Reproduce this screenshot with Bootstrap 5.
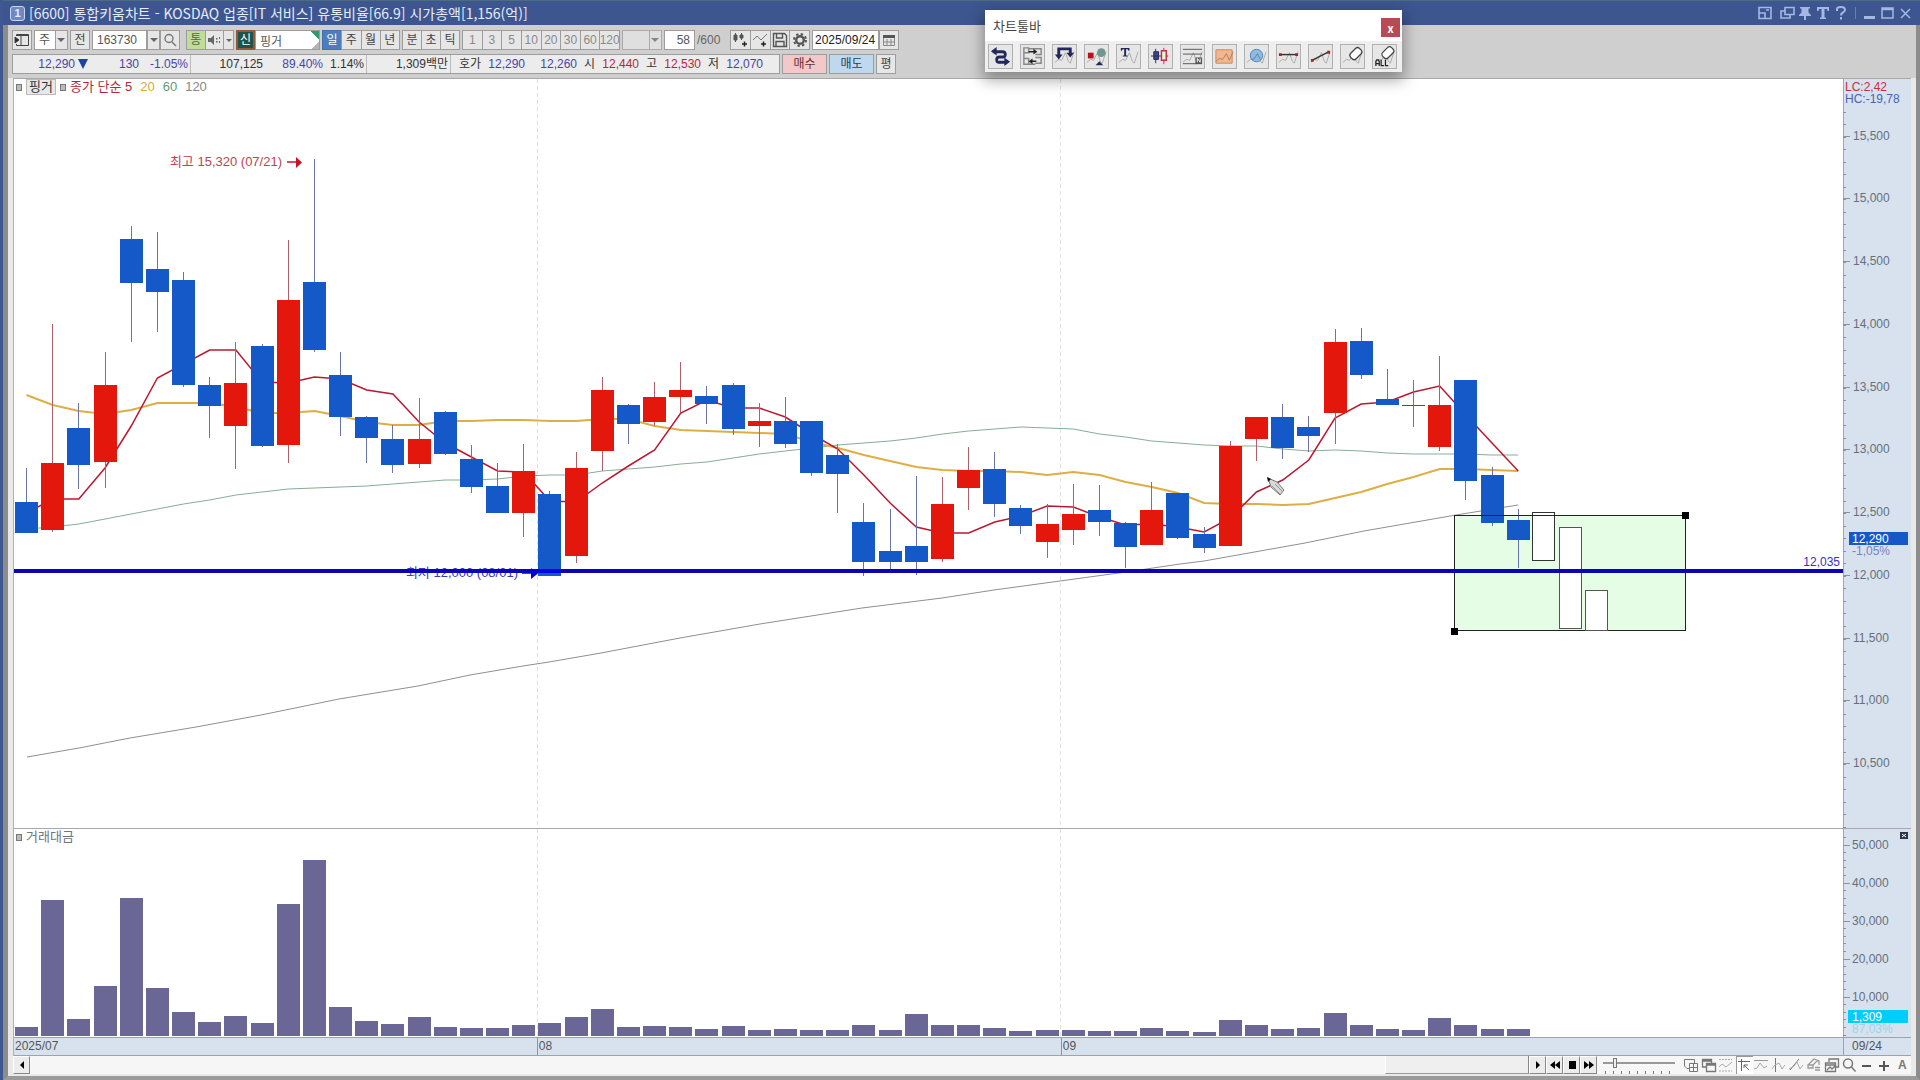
<!DOCTYPE html>
<html lang="ko">
<head>
<meta charset="utf-8">
<meta name="viewport" content="width=device-width, initial-scale=1">
<title>[6600] 통합키움차트</title>
<link href="https://cdn.jsdelivr.net/npm/bootstrap@5.3.0/dist/css/bootstrap.min.css" rel="stylesheet">
<style>
body{font-family:"Liberation Sans","Noto Sans CJK KR",sans-serif;font-size:12px;line-height:16px;color:#333;background:#9a9a9a;overflow:hidden}
.shell{border-left:3px solid #3f5891}
.titlebar{height:25px;background:#3d568f;border-top:1px solid #4c6c84;color:#e6ecfa;padding:0 6px 0 7px}
.titlebar h1{font-size:14px;line-height:20px;font-weight:400;font-family:"Noto Sans CJK KR",sans-serif}
.winno{width:15px;height:15px;border:1px solid #c7d4f2;border-radius:3px;background:#6f8ac2;font-size:11px;line-height:13px;font-weight:700;text-align:center}
.wbtns{gap:2px}
.wbtn{border:0;background:none;padding:0;width:16px;height:16px;color:#a5b8e4;display:flex}
.wbtn svg{width:16px;height:16px}
.work{border-left:5px solid #8c8c8c;border-right:4px solid #8c8c8c;border-bottom:4px solid #9a9a9a}
.tools{background:#cfcfcf;padding:5px 4px 4px;height:53px}
.trow{height:20px;gap:2px;margin-bottom:4px}
.tb{height:20px;width:20px;padding:0;border:1px solid #9d9d9d;background:#e6e6e6;color:#444;font-size:12px;line-height:18px;text-align:center;flex:none;border-radius:0;display:flex;align-items:center;justify-content:center}
.narrow{width:13px}
.tabs{flex:none}
.tabs .tb{margin-right:-1px;flex:1 1 0;min-width:0}
.tabs .tb:last-child{margin-right:0}
.tabs .tb.narrow{flex:0 0 11px}
.g3{width:58px}.g4{width:78px}.g8{width:158px}.gs{width:48px}.gi{width:80px}
.tb svg{width:16px;height:16px;flex:none}
.tb.narrow svg{width:8px}
.dim .tb{color:#8a8a8a}
.tb.day{background:#4f7dbb;color:#fff;border-color:#4470ad}
.tb.all{background:#bfdc98;color:#55683e}
.tb.sin{background:#1f5248;color:#fff;border:2px solid #93593c;line-height:16px;width:19px}
.fld{height:20px;border:1px solid #9d9d9d;border-radius:0;background:#fff;font-size:12px;line-height:18px;color:#555;padding:0 4px;flex:none;appearance:none}
.pick{background:#fff url("data:image/svg+xml,%3Csvg xmlns='http://www.w3.org/2000/svg' width='12' height='18'%3E%3Crect width='12' height='18' fill='%23e6e6e6'/%3E%3Cpath d='M.5 0v18' stroke='%239d9d9d'/%3E%3Cpath d='M2 7h8l-4 4z' fill='%23666'/%3E%3C/svg%3E") right center no-repeat}
.w34{width:34px}.w55{width:55px}.w40{width:40px}.w31{width:31px}.w65{width:65px}.w67{width:67px;padding:0 2px;color:#222}
.w40.pick{background-color:#e6e6e6;opacity:.7}
.ofmax{width:31px;line-height:20px;color:#666}
.corner{background:linear-gradient(225deg,#2f9a6c 6px,transparent 6px),linear-gradient(315deg,#b5b5b5 5px,#fff 5px)}
.quote{height:20px;width:768px;background:#ececec;border:1px solid #9d9d9d;line-height:18px;flex:none}
.quote span{text-align:right;flex:none;white-space:nowrap}
.dn{color:#4745a5}.up{color:#b5283c}
.cell{border-right:1px solid #bbb;padding-right:2px}
.q18{width:18px}.q30{width:30px}.q44{width:44px}.q48{width:48px}.q52{width:52px}.q60{width:60px}.q62{width:62px}.q72{width:72px}.q84{width:84px}
.buy{width:45px;background:#f3c8c8;color:#6b2e34}.sell{width:45px;background:#bfd8ee;color:#27405c}
.body2{background:#e9e9e9;padding:0 5px 2px 5px}
.chart{border-left:1px solid #a9b3bd;border-top:1px solid #a9a9a9}
.plot{background:#fff;min-width:0;flex:1 1 0;position:relative}
.scale{width:68px;background:#d7e2ee;flex:none;box-shadow:inset 1px 0 #9fa9b4;position:relative}
.plot svg,.scale svg{position:absolute;left:0;top:0;width:100%;height:100%;display:block}
.vol{height:209px;border-top:1px solid #a8a8ac}
.dates{height:19px;background:#d7e2ee;border-top:1px solid #9ba3ac;border-bottom:1px solid #9ba3ac;line-height:16px;color:#555}
.m1{flex:523 1 0;padding-left:1px}.m2{flex:523 1 0}.m3{flex:782 1 0}
.m2,.m3{border-left:1px solid #8c949c;padding-left:1px}
.mend{width:68px;flex:none;border-left:1px solid #9ba3ac;padding-left:8px}
.legend{position:absolute;left:2px;top:0;font-size:13px;line-height:16px;z-index:2;gap:4px}
.bx{width:6px;height:7px;border:1px solid #777;background:#bbb}
.nm{border:1px solid #bbb;background:#e8e8e8;font-size:13px;line-height:14px;padding:0 2px;color:#333}
.l5{color:#b5283c}.l20{color:#dba83a}.l60{color:#5f9a7c}.l120{color:#888}
.scroll{height:18px;background:#f6f6f6}
.sb{width:17px;height:18px;border:1px solid #fff;border-right-color:#888;border-bottom-color:#888;background:#ececec;padding:0;display:flex;align-items:center;justify-content:center;flex:none}
.sb svg{width:12px;height:12px}
.thumb{width:144px;background:#efefef;border-left:1px solid #fff;border-right:1px solid #888;border-bottom:1px solid #999}
.zoomr{width:72px;height:18px;margin:0 8px 0 6px;appearance:none;background:linear-gradient(#999,#999) 0 6px/100% 2px no-repeat,repeating-linear-gradient(90deg,#777 0 1px,transparent 1px 8px) 2px 15px/100% 3px no-repeat}
.zoomr::-webkit-slider-thumb{appearance:none;width:4px;height:10px;background:#eee;border:1px solid #777;margin-top:-4px}
.ibs{width:228px;flex:none}
.ib{border:0;background:none;padding:0;width:17px;height:18px;flex:none;color:#777}
.ib svg{width:16px;height:16px;display:block}
.ib.on{background:#fff;box-shadow:inset 1px 1px #999}
.float{position:absolute;left:985px;top:10px;width:417px;background:#efefef;box-shadow:0 6px 14px 2px rgba(0,0,0,.35);z-index:5}
.fhead{background:#fff;height:31px;padding:0 2px 0 8px;font-family:"Noto Sans CJK KR",sans-serif;font-size:13px;color:#444}
.fx{width:19px;height:19px;border:0;background:#b94a55;color:#fff;font-weight:700;font-size:11px;line-height:16px;padding:0;margin-top:8px}
.frow{gap:7px;padding:3px}
.fb{width:25px;height:25px;border:1px solid #b0b0b0;background:#e6e6e6;padding:0}
.fb svg{width:23px;height:23px;display:block}
.px{position:absolute;right:3px;top:3px;width:8px;height:7px;border:0;background:#2c3448;padding:0;z-index:3}
.scale .px svg{position:static;width:8px;height:7px}
svg text{font-size:12px}
svg text.ext{font-size:13px}
</style>
</head>
<body>
<div class="shell vh-100 d-flex flex-column">
<header class="titlebar d-flex align-items-center gap-1 flex-shrink-0">
 <span class="winno">1</span>
 <h1 class="m-0 me-auto">[6600] 통합키움차트 - KOSDAQ 업종[IT 서비스] 유통비율[66.9] 시가총액[1,156(억)]</h1>
 <div class="wbtns d-flex align-items-center">
 <button class="wbtn me-1" aria-label="축소"><svg viewBox="0 0 16 16" fill="none" stroke="currentColor" stroke-width="1.6"><path d="M2 2.500h12v11H2zM2 8h6v5M9 5h3"/></svg></button>
 <button class="wbtn" aria-label="복제"><svg viewBox="0 0 16 16" fill="none" stroke="currentColor" stroke-width="1.600"><path d="M6 2.500h9v7H6zM6 6H2v7h9v-3"/></svg></button>
 <button class="wbtn" aria-label="고정"><svg viewBox="0 0 16 16" fill="currentColor"><path d="M3 2h10v1.500h-1.500v4L14 10v1H9v4H7v-4H2v-1l2.500-2.500v-4H3z"/></svg></button>
 <button class="wbtn" aria-label="글꼴"><svg viewBox="0 0 16 16" fill="currentColor"><path d="M2 2h12v4h-1.500L12 4H9.500v8.500H11V14H5v-1.500h1.500V4H4l-.5 2H2z"/></svg></button>
 <button class="wbtn" aria-label="도움말"><svg viewBox="0 0 16 16" fill="none" stroke="currentColor" stroke-width="2"><path d="M4 6V4q0-2 4-2t4 3q0 1-2 2.500Q8 8.500 8 10.500M8 12v2.500"/></svg></button>
 <span class="vr text-white mx-1 my-1"></span>
 <button class="wbtn" aria-label="최소화"><svg viewBox="0 0 16 16" fill="currentColor"><path d="M2 11h11v3H2z"/></svg></button>
 <button class="wbtn" aria-label="최대화"><svg viewBox="0 0 16 16" fill="none" stroke="currentColor" stroke-width="1.500"><path d="M2 3h11v10H2zM2 4.500h11"/></svg></button>
 <button class="wbtn" aria-label="닫기"><svg viewBox="0 0 16 16" fill="none" stroke="currentColor" stroke-width="1.500"><path d="m3 4 9 9m0-9-9 9"/></svg></button>
 </div>
</header>
<main class="work flex-grow-1 d-flex flex-column">
<div class="tools flex-shrink-0">
 <div class="trow d-flex">
  <button class="tb" aria-label="패널"><svg viewBox="0 0 16 16" fill="none" stroke="#444"><path d="M2.500 4V2.500h12v11h-12V12M7 3v10M2 3.500h13"/><path d="M1 5l4 3-4 3z" fill="#222"/></svg></button>
  <select class="fld pick w34" aria-label="구분"><option>주</option></select>
  <button class="tb">전</button>
  <div class="d-flex pe-1">
  <input class="fld w55" aria-label="종목코드" value="163730">
  <button class="tb narrow" aria-label="종목 목록"><svg viewBox="0 0 8 16"><path d="M0 6h8l-4 4z" fill="#666"/></svg></button>
  <button class="tb" aria-label="검색"><svg viewBox="0 0 16 16" fill="none" stroke="#777" stroke-width="1.400"><circle cx="7" cy="6.500" r="4"/><path d="m10 10 4 4"/></svg></button>
  </div>
  <div class="d-flex tabs gs">
  <button class="tb all">통</button>
  <button class="tb" aria-label="소리"><svg viewBox="0 0 16 16" fill="#666"><path d="M2 6h3l3-3v10L5 10H2zM10 6h1.500v1.500H10zM10 9h1.500v1.500H10zM13 5h1v2h-1zM13 9h1v2h-1z"/></svg></button>
  <button class="tb narrow" aria-label="소리 메뉴"><svg viewBox="0 0 8 16" fill="#666"><path d="M1 7h6l-3 3z"/></svg></button>
  </div>
  <div class="d-flex"><span class="tb sin">신</span><input class="fld w65 corner" aria-label="종목명" value="핑거"></div>
  <div class="d-flex tabs g4"><button class="tb day">일</button><button class="tb">주</button><button class="tb">월</button><button class="tb">년</button></div>
  <div class="d-flex tabs g3"><button class="tb">분</button><button class="tb">초</button><button class="tb">틱</button></div>
  <div class="d-flex tabs g8 dim"><button class="tb">1</button><button class="tb">3</button><button class="tb">5</button><button class="tb">10</button><button class="tb">20</button><button class="tb">30</button><button class="tb">60</button><button class="tb">120</button></div>
  <select class="fld pick w40" aria-label="분 주기"><option></option></select>
  <input class="fld w31 text-end px-1" aria-label="봉 개수" value="58">
  <span class="ofmax">/600</span>
  <div class="d-flex tabs gi">
  <button class="tb" aria-label="봉 추가"><svg viewBox="0 0 16 16" stroke="#555" fill="#555"><path d="M3.500 1v9M9.500 1v7" /><path d="M2 3h3v5H2zM8 3h3v3H8z"/><path d="M10 12h5M12.500 9.500v5" stroke="#222" stroke-width="1.500"/></svg></button>
  <button class="tb" aria-label="지표 추가"><svg viewBox="0 0 16 16" fill="none" stroke="#777"><path d="M1 8l4-4 4 4 6-6"/><path d="M9 12h5M11.500 9.500v5" stroke="#222" stroke-width="1.500"/></svg></button>
  <button class="tb" aria-label="저장"><svg viewBox="0 0 16 16" fill="none" stroke="#555" stroke-width="1.400"><path d="M1.500 1.500h11l2 2v11h-13zM4.500 2v4h6V2M4 14V9.500h8V14"/></svg></button>
  <button class="tb" aria-label="설정"><svg viewBox="0 0 16 16" fill="none" stroke="#555"><circle cx="8" cy="8" r="3.800" stroke-width="2.400"/><circle cx="8" cy="8" r="6" stroke-width="2" stroke-dasharray="2.400 2.310"/></svg></button>
  </div>
  <div class="d-flex"><input class="fld w67" aria-label="날짜" value="2025/09/24"><button class="tb" aria-label="달력"><svg viewBox="0 0 16 16" fill="none" stroke="#888"><path d="M2.500 3.500h11v10h-11zM6 7v6M10 7v6M3 10h10"/><path d="M2 3h12v3H2z" fill="#555" stroke="none"/></svg></button></div>
 </div>
 <div class="trow d-flex mb-0">
  <div class="quote d-flex">
   <span class="dn q62">12,290</span><svg width="16" height="18"><path d="M3 4h10l-5 10z" fill="#1e3fa8"/></svg>
   <span class="dn q48">130</span><span class="dn cell q52">-1.05%</span>
   <span class="q72">107,125</span><span class="dn q60">89.40%</span><span class="cell q44">1.14%</span>
   <span class="cell q84">1,309백만</span><span class="q30">호가</span><span class="dn q44">12,290</span><span class="dn q52">12,260</span>
   <span class="q18">시</span><span class="up q44">12,440</span><span class="q18">고</span><span class="up q44">12,530</span><span class="q18">저</span><span class="dn q44">12,070</span>
  </div>
  <button class="tb buy">매수</button><button class="tb sell">매도</button><button class="tb">평</button>
 </div>
</div>
<div class="body2 flex-grow-1 d-flex flex-column">
 <section class="chart flex-grow-1 d-flex flex-column">
  <div class="d-flex flex-grow-1">
   <div class="plot">
    <div class="legend d-flex align-items-center"><i class="bx"></i><button class="nm">핑거</button><i class="bx"></i><span class="l5">종가 단순 5</span><span class="l20 ps-1">20</span><span class="l60 ps-1">60</span><span class="l120 ps-1">120</span></div>
    <svg id="price"></svg>
   </div>
   <div class="scale"><svg id="pscale"></svg></div>
  </div>
  <div class="vol d-flex">
   <div class="plot"><div class="legend d-flex align-items-center"><i class="bx"></i><span class="text-secondary">거래대금</span></div><svg id="volume"></svg></div>
   <div class="scale"><svg id="vscale"></svg><button class="px" aria-label="지표 닫기"><svg viewBox="0 0 8 7" stroke="#fff"><path d="m2 2 4 3m0-3-4 3"/></svg></button></div>
  </div>
  <div class="dates d-flex"><span class="m1">2025/07</span><span class="m2">08</span><span class="m3">09</span><span class="mend">09/24</span></div>
 </section>
 <div class="scroll d-flex">
  <button class="sb" aria-label="왼쪽"><svg viewBox="0 0 12 12"><path d="M8 2v8L4 6z"/></svg></button>
  <div class="flex-grow-1"></div>
  <div class="thumb"></div>
  <button class="sb" aria-label="오른쪽"><svg viewBox="0 0 12 12"><path d="M4 2v8l4-4z"/></svg></button>
  <button class="sb" aria-label="뒤로"><svg viewBox="0 0 12 12"><path d="M6 2v8L1 6zM11 2v8L6 6z"/></svg></button>
  <button class="sb" aria-label="정지"><svg viewBox="0 0 12 12"><path d="M3 2h7v8H3z"/></svg></button>
  <button class="sb" aria-label="앞으로"><svg viewBox="0 0 12 12"><path d="M1 2v8l5-4zM6 2v8l5-4z"/></svg></button>
  <input type="range" class="zoomr" aria-label="확대" min="0" max="100" value="14">
  <div class="d-flex ibs justify-content-between">
  <button class="ib" aria-label="창 추가"><svg viewBox="0 0 16 16" fill="none" stroke="currentColor"><path d="M6 11.500H4L1.500 9V2.500h10V6M6.500 6.500h8v8h-8zM10.500 7v7M7 10.500h7"/></svg></button>
  <button class="ib" aria-label="창 겹침"><svg viewBox="0 0 16 16" fill="none" stroke="currentColor" stroke-width="1.300"><path d="M5 10H1.500V2.500h9V6M5.500 6.500h9v8h-9zM5.500 8h9M1.500 4h9"/></svg></button>
  <button class="ib" aria-label="추세"><svg viewBox="0 0 16 16" fill="none" stroke="#aaa"><path d="M1 2.500h13M1 14h13" stroke-dasharray="2 1"/><path d="m1 10 3-3 4 3 6-5"/></svg></button>
  <button class="ib on" aria-label="십자선"><svg viewBox="0 0 16 16" fill="none" stroke="#666"><path d="M2 4.500h12M5.500 2v12"/><path d="m13 13-5-5M8 11V8h4"/></svg></button>
  <button class="ib" aria-label="수평선"><svg viewBox="0 0 16 16" fill="none" stroke="currentColor"><path d="M1 3.500h14" stroke="#999"/><path d="M1 12l3-1 3-5 4 5 3-2" stroke="#aaa"/></svg></button>
  <button class="ib" aria-label="수직선"><svg viewBox="0 0 16 16" fill="none" stroke="currentColor"><path d="M4.500 1v14"/><path d="M1 12l3-4 4-2 3 6 3-4" stroke="#aaa"/></svg></button>
  <button class="ib" aria-label="사선"><svg viewBox="0 0 16 16" fill="none" stroke="currentColor"><path d="m2 13 9-11"/><path d="M1 12l5-3 3-4 3 7 3-4" stroke="#aaa"/></svg></button>
  <button class="ib" aria-label="전체 지우기"><svg viewBox="0 0 16 16" fill="none" stroke="#999" stroke-width="1.300"><path d="m2 8 6-6 5 2v4M2 8v3h5V8zM7 8l5-5"/><path d="M9 13h5M9 10.500h5" stroke-width="1.500"/></svg></button>
  <button class="ib" aria-label="다중 차트"><svg viewBox="0 0 16 16" fill="none" stroke="currentColor" stroke-width="1.300"><path d="M5 5V2h9.500v8H12M1.500 6h10v8.500h-10zM1.500 8h10M3 13l3-3 2 2 3-3"/></svg></button>
  <button class="ib" aria-label="돋보기"><svg viewBox="0 0 16 16" fill="none" stroke="currentColor" stroke-width="1.500"><circle cx="7" cy="6.500" r="4.500"/><path d="m10.500 10 4 4.500"/></svg></button>
  <button class="ib" aria-label="축소 보기"><svg viewBox="0 0 16 16" stroke="#555" stroke-width="2"><path d="M3 9h9"/></svg></button>
  <button class="ib" aria-label="확대 보기"><svg viewBox="0 0 16 16" stroke="#555" stroke-width="2"><path d="M3 9h10M8 4v10"/></svg></button>
  <button class="ib fw-bold">A</button>
  </div>
 </div>
</div>
</main>
</div>

<aside class="float">
 <div class="fhead d-flex justify-content-between"><span class="pt-2">차트툴바</span><button class="fx" aria-label="닫기">x</button></div>
 <div class="frow d-flex" id="ftools"></div>
</aside>

<script src="https://cdn.jsdelivr.net/npm/bootstrap@5.3.0/dist/js/bootstrap.bundle.min.js"></script>
<script>
// Drawing tools of the floating palette: label and icon body on a 24 unit grid
const wave='<path d="M2 18l4-3 3 1 4-8 3 9 2 2 4-12" fill="none" stroke="#aaa"/>';
const tools=[
['이동','<path d="M4 7h10q3 0 3 3t-3 2.500h-3q-3 0-3 3t3 2.500h7" fill="none" stroke="#23285c" stroke-width="3"/><path d="M8 2v9L2 6.500zM16 13v9l6-4.500z" fill="#23285c"/>'],
['정렬','<g fill="none" stroke="#888" stroke-width="1.500"><path d="M3 3h5v5H3zM3 8v12h5v-6H3M15 4h6v6h-6M15 13h6v6h-6M8 4h7M8 20h7"/></g><path d="M8 7h6M10 17h6" stroke="#222" stroke-width="1.500"/><path d="M13 4l4 3-4 3zM12 14v6l-4-3z" fill="#222"/>'],
['되돌리기',wave+'<path d="M6 12V4h12v5" fill="none" stroke="#23285c" stroke-width="3"/><path d="M2 10h8l-4 5zM14 8h8l-4 5z" fill="#23285c"/>'],
['도형',wave+'<path d="M3 8h6v6H3z" fill="#b8101c"/><circle cx="17" cy="8" r="4.500" fill="#6f978f"/><path d="M15 17l4 4h-8z" fill="#23285c"/>'],
['문자',wave+'<path d="M4 3h9v3h-1l-1-1.500H9.500V11H11v1H6v-1h1.500V4.500H6L5 6H4z" fill="#23285c"/>'],
['봉','<path d="M7 4v15" stroke="#23285c"/><path d="M5 7h5v8H5z" fill="#3d4592" stroke="#23285c"/><path d="M15.500 3v17" stroke="#c03040"/><path d="M2 11.500h18" stroke="#333"/><path d="M13 6h5v10h-5z" fill="#eed" stroke="#c03040" stroke-width="1.500"/>'],
['평행선',wave+'<path d="M2 4.500h20M2 9.500h20M2 19.500h14" stroke="#555"/><path d="M15 13h7v7h-7z" fill="#555"/><path d="M17 18v-4l3 4v-4" stroke="#fff" fill="none"/>'],
['사각형','<path d="M3 5h17v14H3z" fill="#f3b68d" stroke="#cf8a5a"/><path d="M3 17l4-3 3 1 4-6 3 7 4-9" fill="none" stroke="#a98060"/>'],
['원',wave+'<circle cx="12" cy="11" r="6.500" fill="#86b6df" fill-opacity=".9" stroke="#4f86ba"/><path d="M7 15l3-1 3-5 3 6" fill="none" stroke="#5d87b0"/>'],
['수평 구간',wave+'<path d="M3 10h18" stroke="#333" stroke-width="1.500"/><path d="M2 8.500h3v3H2zM19 8.500h3v3h-3z" fill="#a22"/>'],
['추세선',wave+'<path d="M3 16L21 7" stroke="#333" stroke-width="1.500"/><path d="M2 14.500h3v3H2zM19 6h3v3h-3z" fill="#a22"/>'],
['지우개',wave+'<rect x="9" y="5" width="13" height="8" rx="3" transform="rotate(-45 15.500 9)" fill="#fff" stroke="#444" stroke-width="1.300"/>'],
['전체 지우개',wave+'<rect x="9" y="4" width="13" height="8" rx="3" transform="rotate(-45 15.500 8)" fill="#fff" stroke="#444" stroke-width="1.300"/><path d="M3 22v-5l1-1.500h1.500L6.500 17v5M3 19.500h3.500M8.500 15.500v6h3M13 15.500v6h3" fill="none" stroke="#222" stroke-width="1.300"/>']];
document.getElementById('ftools').innerHTML=tools.map(t=>`<button class="fb" aria-label="${t[0]}"><svg viewBox="0 0 24 24">${t[1]}</svg></button>`).join('');

// Candles: direction, high, body top, body bottom, low on the 749 unit price grid that starts at 79
const candles=`B468 502 533 533|R324 463 530 532|B403 428 465 489|R352 385 462 488|B226 239 283 342|B232 269 292 332|B272 280 385 387|B377 385 406 438|R342 383 426 469|B344 346 446 447|R240 300 445 463|B159 282 350 352|B352 375 417 436|B416 417 438 463|B425 439 465 473|R398 439 464 468|B411 412 454 455|B445 459 487 493|B463 486 513 513|R444 471 513 537|B491 494 576 576|R452 468 556 563|R377 390 451 471|B404 405 424 444|R382 397 422 426|R362 390 397 413|B386 396 404 424|B383 385 429 435|R403 421 426 447|B397 421 444 448|B421 421 473 476|B444 455 474 513|B503 522 562 576|B509 551 562 569|B476 546 562 575|R477 504 559 562|R447 470 488 510|B452 469 504 517|B505 508 526 534|R504 524 542 558|R484 514 530 545|B485 510 522 536|B522 523 547 568|R482 510 545 545|B493 493 538 539|B527 534 548 553|R441 446 546 546|R417 417 439 461|B404 417 448 459|B416 427 436 452|R329 342 413 444|B328 341 375 379|B369 399 405 405|B380 405 406 427|R356 405 447 451|B380 380 481 500|B467 475 523 526|B509 520 540 568`.split('|').map(s=>[s[0],...s.slice(1).split(' ').map(Number)]);
const ma5=[513,499,499,468,426,378,364,350,350,382,383,377,379,390,394,422,443,457,471,472,501,502,483,466,450,413,400,408,408,417,434,449,475,503,527,533,533,522,516,506,507,517,525,524,527,532,518,492,480,460,418,404,402,392,386,415,443,471];
const ma20=[395,405,411,414,410,403,403,403,407,413,413,411,416,422,425,425,421,421,420,420,421,421,419,419,426,430,431,432,433,434,442,448,455,461,467,470,471,471,472,475,472,475,482,487,493,503,504,504,505,504,498,492,484,477,469,469,470,471];
const ma60=[529,527,524,519,514,509,504,500,495,492,489,488,487,486,484,482,480,480,479,476,475,475,471,469,467,464,462,458,454,451,448,445,443,441,438,434,431,429,427,428,429,434,437,441,443,445,446,446,449,451,450,451,453,454,454,454,455,455];
const ma120=[[27,757],[79,748],[130,738],[196,727],[261,715],[339,699],[418,686],[470,675],[523,666],[549,662],[601,653],[680,638],[760,624],[862,608],[942,598],[994,590],[1060,581],[1126,572],[1180,564],[1204,561],[1305,543],[1364,531],[1456,515],[1518,505]];
const vols=[1027,900,1019,986,898,988,1012,1022,1016,1023,904,860,1007,1021,1024,1017,1027,1028,1028,1025,1023,1017,1009,1027,1026,1027,1029,1026,1030,1029,1030,1030,1025,1030,1014,1025,1025,1028,1031,1030,1030,1031,1031,1028,1031,1032,1020,1025,1029,1028,1013,1025,1029,1030,1018,1025,1029,1029];
const cx=i=>26.5+26.17*i, $=id=>document.getElementById(id);

function draw(){
 const P=$('price'),W=P.clientWidth,H=P.clientHeight,kx=W/1829,ky=H/749;
 const X=x=>(x-14)*kx, Y=y=>(y-79)*ky;
 const rect=(x,y,w,h,a)=>`<rect x="${Math.round(X(x))}" y="${Math.round(Y(y))}" width="${Math.round(w*kx)}" height="${Math.max(1,Math.round(h*ky))}" ${a} shape-rendering="crispEdges"/>`;
 const line=(pts,c,w)=>`<polyline fill="none" stroke="${c}" stroke-width="${w}" points="${pts.map(p=>X(p[0]).toFixed(1)+','+Y(p[1]).toFixed(1)).join(' ')}"/>`;
 const months=h=>[537,1060].map(x=>`<path d="M${Math.round(X(x))+.5} 0V${h}" stroke="#e0e0e4" stroke-dasharray="4 3"/>`).join('');
 const ser=a=>a.map((v,i)=>[cx(i),v]);
 let s=months(H);
 s+=rect(1455,515,231,116,'fill="#e4fde4"');
 s+=line(ma120,'#8f8f8f',1)+line(ser(ma60),'#86ad96',1)+line(ser(ma20),'#deae45',2)+line(ser(ma5),'#ba1830',1.5);
 candles.forEach(([d,h,t,b,l],i)=>{
  const c=d=='R'?'#e3170c':'#1559c9',w=d=='R'?'#b0606a':'#6a74ac';
  s+=rect(Math.floor(cx(i)),h,1,l-h,`fill="${w}"`)+rect(cx(i)-11.5,t,23,b-t,`fill="${c}"`);
 });
 const bx=(x,y,w,h,f,st)=>`<rect x="${Math.round(X(x))+.5}" y="${Math.round(Y(y))+.5}" width="${Math.round(w*kx)}" height="${Math.round(h*ky)}" fill="${f}" stroke="${st}"/>`;
 s+=bx(1454,515,231,115,'none','#222');
 s+=bx(1532,512,22,48,'#fff','#333')+bx(1559,527,22,101,'#fff','#555')+bx(1585,590,22,40,'#fff','#555');
 s+=`<path d="M${X(1532)} ${Math.round(Y(515))+.5}h${23*kx}" stroke="#222"/>`;
 s+=rect(1682,512,7,7,'fill="#000"')+rect(1451,628,7,7,'fill="#000"');
 // price extremes
 const ty=y=>Y(y).toFixed(0);
 s+=`<text class="ext" x="${X(282)}" y="${ty(166)}" text-anchor="end" fill="#c4404e">최고 15,320 (07/21)</text><path d="M${X(287)} ${ty(162)}h10" stroke="#d01020" stroke-width="1.500"/><path d="M${X(296)} ${ty(157)}v11l6-5.500z" fill="#d01020"/>`;
 s+=`<text class="ext" x="${X(518)}" y="${ty(577)}" text-anchor="end" fill="#3a36c8">최저 12,000 (08/01)</text>`;
 s+=rect(14,569,1829,4,'fill="#0c05b8"');
 s+=`<path d="M${X(522)} ${ty(573)}h10" stroke="#0000d8" stroke-width="1.500"/><path d="M${X(531)} ${ty(568)}v11l7-5.500z" fill="#0000d8"/>`;
 s+=rect(538,569,23,4,'fill="#0505dc"');
 s+=`<text x="${X(1840)}" y="${ty(566)}" text-anchor="end" fill="#3a30c8">12,035</text>`;
 // pencil pointer
 s+=`<g transform="translate(${X(1267)} ${Y(477)})"><path d="M1 1l3 9 9 8 4-5-7-8z" fill="#d8d8d4" stroke="#777"/><path d="M5 9l8 8M8 7l7 7" stroke="#999"/><path d="M0 0l4 2-3 3z" fill="#111"/></g>`;
 P.innerHTML=s;

 let a='';
 for(let y=111.5;y<828;y+=12.55)a+=`<path d="M0 ${Math.round(Y(y))+.5}h3" stroke="#8a949e"/>`;
 for(let p=15500,y=135.5;p>=10500;p-=500,y+=62.75)a+=`<path d="M0 ${Math.round(Y(y))+.5}h7" stroke="#8a949e"/><text x="10" y="${ty(y+4)}" fill="#666f7c">${p.toLocaleString('en-US')}</text>`;
 a+=`<text x="2" y="${ty(91)}" fill="#c4303f">LC:2,42</text><text x="2" y="${ty(103)}" fill="#4a62b4">HC:-19,78</text>`;
 a+=`<rect x="6" y="${ty(532)}" width="59" height="13" fill="#1559c9"/><text x="9" y="${ty(543)}" fill="#fff">12,290</text><text x="9" y="${ty(555)}" fill="#7384c0">-1,05%</text>`;
 $('pscale').innerHTML=a;

 $('volume').innerHTML=months(208)+vols.map((t,i)=>`<rect x="${Math.round(X(cx(i)-11.5))}" y="${t-829}" width="${Math.round(23*kx)}" height="${1036-t}" fill="#6a6695" shape-rendering="crispEdges"/>`).join('');
 let v='';
 for(let i=0;i<27;i++)v+=`<path d="M0 ${Math.round(8+i*7.6)+.5}h3" stroke="#8a949e"/>`;
 for(let i=0;i<5;i++)v+=`<path d="M0 ${16.5+38*i}h7" stroke="#8a949e"/><text x="9" y="${20+38*i}" fill="#666f7c">${50-10*i},000</text>`;
 v+=`<rect x="5" y="181" width="60" height="13" fill="#00cdfb"/><text x="9" y="192" fill="#fff">1,309</text><text x="9" y="204" fill="#9bd3e8">87,03%</text>`;
 $('vscale').innerHTML=v;
}
draw();addEventListener('resize',draw);
</script>
</body>
</html>
